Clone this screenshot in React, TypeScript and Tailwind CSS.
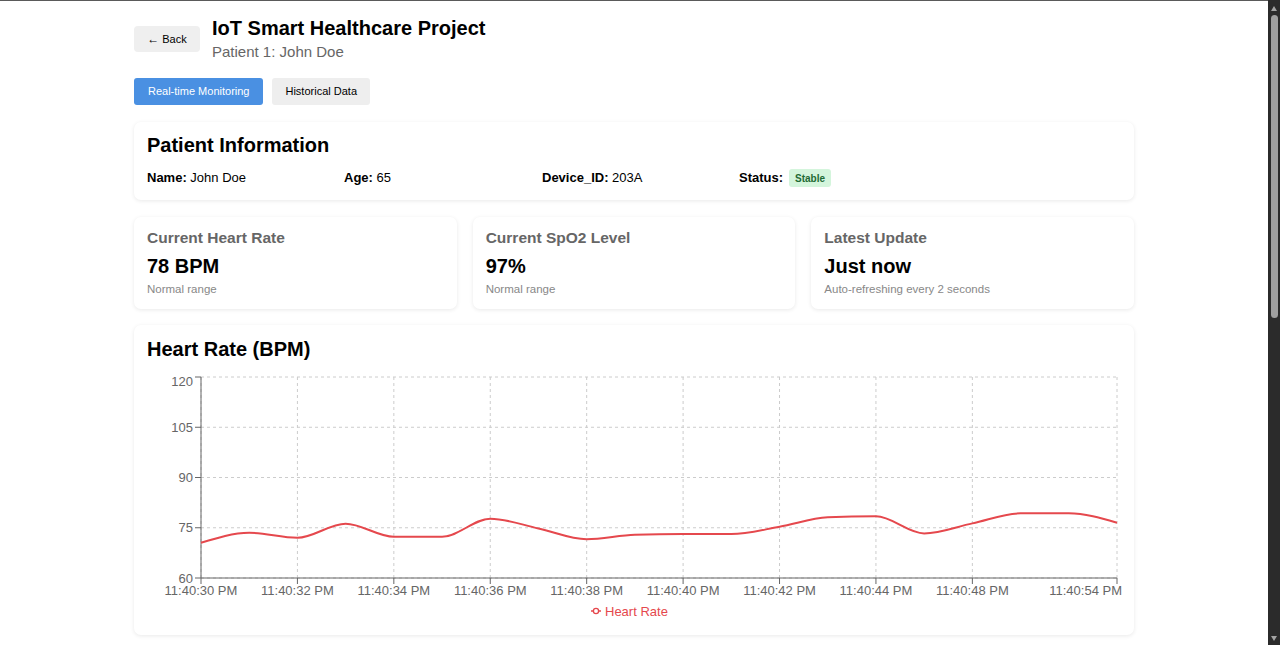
import React from "react";

const FONT = { fontFamily: "'Liberation Sans', Arial, sans-serif" };

const values = [70.5, 73.5, 72, 76.2, 72.3, 72.3, 77.7, 74.8, 71.6, 72.9, 73.1, 73.1, 75.3, 78.1, 78.4, 73.3, 76.3, 79.3, 79.3, 76.5];

const X0 = 54;
const X1 = 970;
const YT = 10;
const YB = 211;
const step = (X1 - X0) / (values.length - 1);
const xOf = (i: number) => X0 + i * step;
const yOf = (v: number) => YT + ((120 - v) * (YB - YT)) / 60;

function monotonePath(pts: [number, number][]) {
  const n = pts.length;
  const t: number[] = new Array(n).fill(0);
  const sign = (v: number) => (v < 0 ? -1 : 1);
  for (let i = 1; i < n - 1; i++) {
    const [x0, y0] = pts[i - 1];
    const [x1, y1] = pts[i];
    const [x2, y2] = pts[i + 1];
    const h0 = x1 - x0;
    const h1 = x2 - x1;
    const s0 = (y1 - y0) / h0;
    const s1 = (y2 - y1) / h1;
    const p = (s0 * h1 + s1 * h0) / (h0 + h1);
    t[i] = (sign(s0) + sign(s1)) * Math.min(Math.abs(s0), Math.abs(s1), 0.5 * Math.abs(p)) || 0;
  }
  {
    const h = pts[1][0] - pts[0][0];
    t[0] = (3 * (pts[1][1] - pts[0][1]) / h - t[1]) / 2;
    const hn = pts[n - 1][0] - pts[n - 2][0];
    t[n - 1] = (3 * (pts[n - 1][1] - pts[n - 2][1]) / hn - t[n - 2]) / 2;
  }
  let d = `M${pts[0][0]},${pts[0][1]}`;
  for (let i = 0; i < n - 1; i++) {
    const [x0, y0] = pts[i];
    const [x1, y1] = pts[i + 1];
    const dx = (x1 - x0) / 3;
    d += `C${x0 + dx},${y0 + dx * t[i]},${x1 - dx},${y1 - dx * t[i + 1]},${x1},${y1}`;
  }
  return d;
}

const xTicks: { i: number; label: string }[] = [
  { i: 0, label: "11:40:30 PM" },
  { i: 2, label: "11:40:32 PM" },
  { i: 4, label: "11:40:34 PM" },
  { i: 6, label: "11:40:36 PM" },
  { i: 8, label: "11:40:38 PM" },
  { i: 10, label: "11:40:40 PM" },
  { i: 12, label: "11:40:42 PM" },
  { i: 14, label: "11:40:44 PM" },
  { i: 16, label: "11:40:48 PM" },
  { i: 19, label: "11:40:54 PM" },
];

const yTicks = [120, 105, 90, 75, 60];
const RED = "#e5484d";

function HeartChart() {
  const path = monotonePath(values.map((v, i) => [xOf(i), yOf(v)]));
  return (
    <svg width={980} height={255} className="block overflow-visible" style={FONT}>
      {yTicks.map((v) => (
        <line key={v} x1={X0} x2={X1} y1={yOf(v)} y2={yOf(v)} stroke="#ccc" strokeDasharray="3 3" />
      ))}
      {xTicks.map((t) => (
        <line key={t.i} x1={xOf(t.i)} x2={xOf(t.i)} y1={YT} y2={YB} stroke="#ccc" strokeDasharray="3 3" />
      ))}
      <line x1={X0} x2={X0} y1={YT} y2={YB} stroke="#666" />
      <line x1={X0} x2={X1} y1={YB} y2={YB} stroke="#666" />
      {yTicks.map((v) => (
        <g key={v}>
          <line x1={X0 - 6} x2={X0} y1={yOf(v)} y2={yOf(v)} stroke="#666" />
          <text x={X0 - 8} y={yOf(v) + 4.6 + (v === 120 ? 4 : 0)} textAnchor="end" fontSize={13} fill="#666">
            {v}
          </text>
        </g>
      ))}
      {xTicks.map((t, k) => (
        <g key={t.i}>
          <line x1={xOf(t.i)} x2={xOf(t.i)} y1={YB} y2={YB + 6} stroke="#666" />
          <text
            x={k === xTicks.length - 1 ? xOf(t.i) + 5 : xOf(t.i)}
            y={228}
            textAnchor={k === xTicks.length - 1 ? "end" : "middle"}
            fontSize={13}
            fill="#666"
          >
            {t.label}
          </text>
        </g>
      ))}
      <path d={path} fill="none" stroke={RED} strokeWidth={2} />
      <line x1={444} x2={454} y1={244} y2={244} stroke={RED} strokeWidth={1.5} />
      <circle cx={449} cy={244} r={2.6} fill="#fff" stroke={RED} strokeWidth={1.3} />
      <text x={458} y={248.6} fontSize={13} fill={RED}>
        Heart Rate
      </text>
    </svg>
  );
}

function StatCard({ title, value, note }: { title: string; value: string; note: string }) {
  return (
    <div className="bg-white rounded-[7px] shadow-[0_1px_4px_rgba(0,0,0,0.09)] pt-3 pb-[13px] px-[13px]">
      <div className="text-[15.5px] leading-[18px] font-bold text-[#666]">{title}</div>
      <div className="mt-2 text-[20px] leading-[23px] font-bold text-black">{value}</div>
      <div className="mt-1 text-[11.5px] leading-[14px] text-[#888]">{note}</div>
    </div>
  );
}

export default function App() {
  return (
    <div className="h-[645px] w-[1280px] overflow-hidden flex bg-white" style={FONT}>
      <div className="flex-1 border-t border-[#5a5a5a] overflow-hidden">
        <div className="w-[1000px] mx-auto pt-[16px]">
          {/* header */}
          <div className="flex items-center gap-3">
            <button className="h-[26px] w-[66px] flex items-center justify-center bg-[#efefef] rounded-[4px] text-[11px] text-black">
              <span className="text-[12px] mr-[3px]">←</span>Back
            </button>
            <div>
              <div className="text-[20px] leading-[23px] font-bold text-black">IoT Smart Healthcare Project</div>
              <div className="mt-[3px] text-[15px] leading-[18px] text-[#666]">Patient 1: John Doe</div>
            </div>
          </div>

          {/* tabs */}
          <div className="mt-[17px] flex gap-[9px]">
            <button className="h-[27px] px-[14px] rounded-[3px] bg-[#4a90e2] text-white text-[11px]">
              Real-time Monitoring
            </button>
            <button className="h-[27px] px-[13px] rounded-[3px] bg-[#eeeeee] text-black text-[11px]">
              Historical Data
            </button>
          </div>

          {/* patient info */}
          <div className="mt-[17px] bg-white rounded-[7px] shadow-[0_1px_4px_rgba(0,0,0,0.09)] pt-3 pb-[13px] px-[13px]">
            <div className="text-[20px] leading-[23px] font-bold text-black">Patient Information</div>
            <div className="mt-3 flex items-center h-[18px] text-[13px] text-black">
              <div className="w-[197px]">
                <span className="font-bold">Name:</span> John Doe
              </div>
              <div className="w-[198px]">
                <span className="font-bold">Age:</span> 65
              </div>
              <div className="w-[197px]">
                <span className="font-bold">Device_ID:</span> 203A
              </div>
              <div className="flex items-center">
                <span className="font-bold">Status:</span>
                <span className="ml-[6px] h-[18px] px-[6px] rounded-[3px] bg-[#d4f5dc] text-[#1f6b34] text-[10px] font-bold flex items-center">
                  Stable
                </span>
              </div>
            </div>
          </div>

          {/* stats */}
          <div className="mt-[17px] grid grid-cols-3 gap-4">
            <StatCard title="Current Heart Rate" value="78 BPM" note="Normal range" />
            <StatCard title="Current SpO2 Level" value="97%" note="Normal range" />
            <StatCard title="Latest Update" value="Just now" note="Auto-refreshing every 2 seconds" />
          </div>

          {/* chart */}
          <div className="mt-4 bg-white rounded-[7px] shadow-[0_1px_4px_rgba(0,0,0,0.09)] pt-[13px] pb-[13px] px-[13px]">
            <div className="text-[20px] leading-[23px] font-bold text-black">Heart Rate (BPM)</div>
            <div className="mt-[6px]">
              <HeartChart />
            </div>
          </div>
        </div>
      </div>

      {/* scrollbar */}
      <div className="w-[12px] bg-[#2b2b2b] flex flex-col items-center">
        <svg width={12} height={14} className="block">
          <polygon points="3,11 9,11 6,6" fill="#a3a3a3" />
        </svg>
        <div className="mt-[1px] w-[7px] h-[303px] rounded-full bg-[#9f9f9f]" />
        <div className="flex-1" />
        <svg width={12} height={12} className="block">
          <polygon points="3,3 9,3 6,8" fill="#a3a3a3" />
        </svg>
      </div>
    </div>
  );
}
